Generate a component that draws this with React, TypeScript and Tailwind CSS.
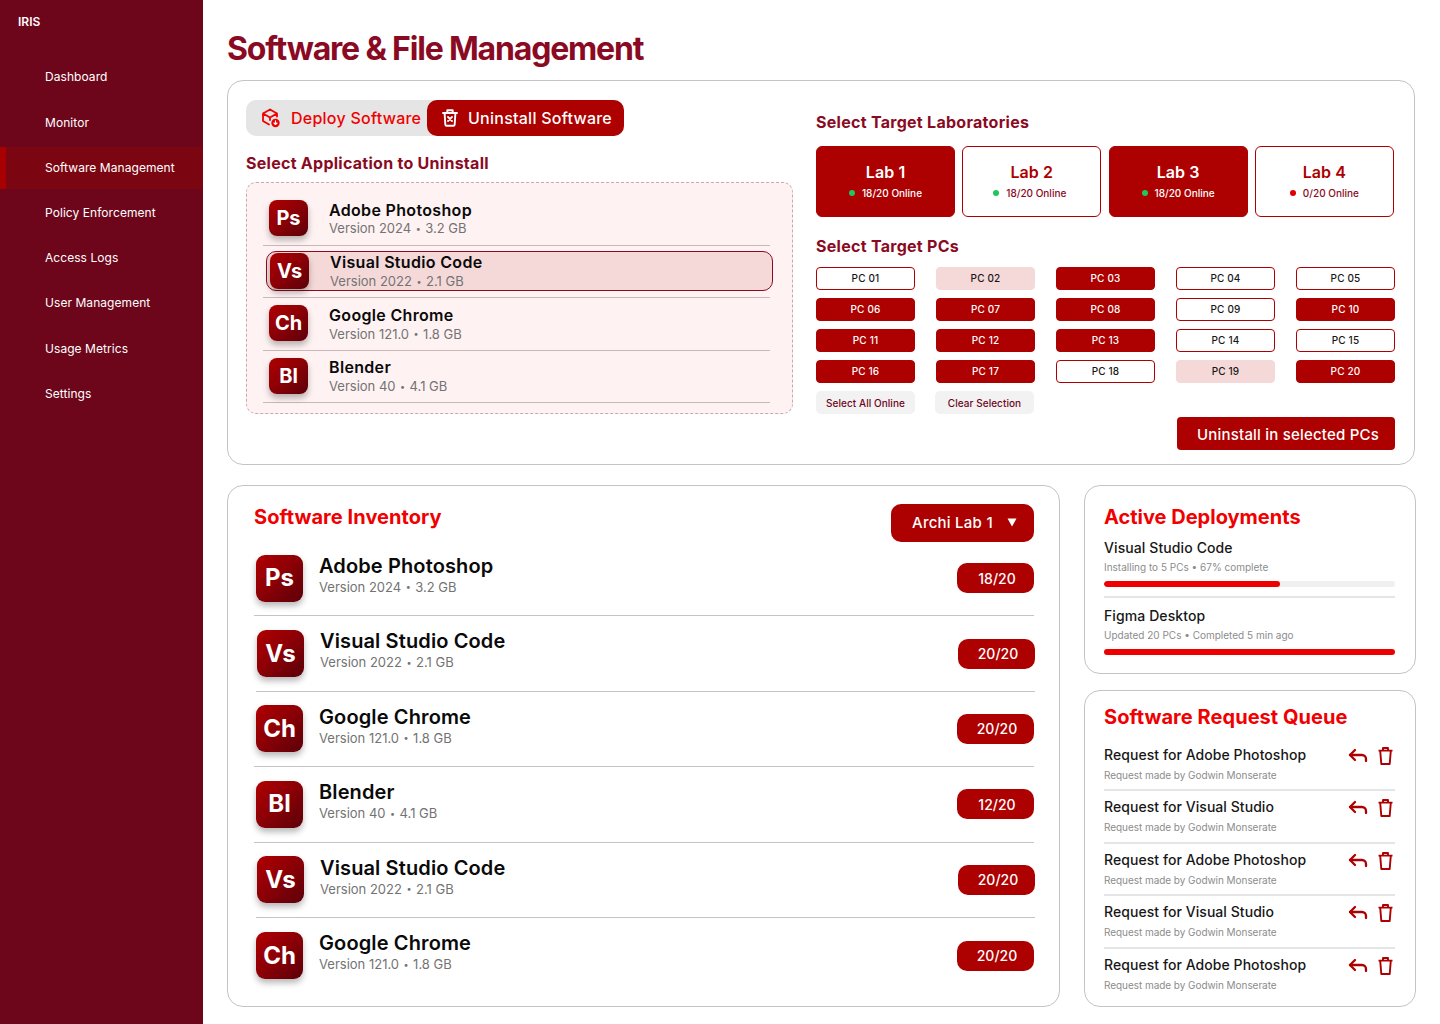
import React from "react";
import { Reply } from "lucide-react";

const nav = ["Dashboard", "Monitor", "Software Management", "Policy Enforcement", "Access Logs", "User Management", "Usage Metrics", "Settings"];

const apps = [
  { ab: "Ps", name: "Adobe Photoshop", v1: "Version 2024", v2: "3.2 GB", c: "18/20", row: "h-[46px]", inner: "pl-[6px]", tx: "" },
  { ab: "Vs", name: "Visual Studio Code", v1: "Version 2022", v2: "2.1 GB", c: "20/20", row: "mt-[4.5px] h-[47px]", inner: "ml-[3px] h-10 w-[507px] rounded-[10px] border border-[#8a0a24] bg-[#f5d9d9] pl-[3px]", tx: "mt-[1px]" },
  { ab: "Ch", name: "Google Chrome", v1: "Version 121.0", v2: "1.8 GB", c: "20/20", row: "h-[53.5px]", inner: "pl-[6px] pt-[7px]", tx: "" },
  { ab: "Bl", name: "Blender", v1: "Version 40", v2: "4.1 GB", c: "12/20", row: "h-[52px]", inner: "pl-[6px] pt-[6px]", tx: "" },
];
const inv = [...apps, apps[1], apps[2]];

const labs = [
  { n: "Lab 1", s: "18/20 Online", on: true, dot: "bg-[#22c55e]", sh: "" },
  { n: "Lab 2", s: "18/20 Online", on: false, dot: "bg-[#22c55e]", sh: "pr-[4px]" },
  { n: "Lab 3", s: "18/20 Online", on: true, dot: "bg-[#22c55e]", sh: "" },
  { n: "Lab 4", s: "0/20 Online", on: false, dot: "bg-[#e00000]", sh: "" },
];

// o: outline, p: pink, r: red
const pcs = "o p r o o r r r o r r r r o o r r o p r".split(" ");

const reqs = ["Adobe Photoshop", "Visual Studio", "Adobe Photoshop", "Visual Studio", "Adobe Photoshop"];

function AppIcon({ ab, size }: { ab: string; size: "sm" | "lg" }) {
  return (
    <div
      className={
        "flex shrink-0 items-center justify-center bg-gradient-to-tl from-[#5c0008] via-[#8a0006] to-[#b00000] font-bold text-white shadow-[0_4px_6px_rgba(0,0,0,0.28)] " +
        (size === "sm" ? "h-9 w-[39px] rounded-lg text-[20px]" : "h-[47px] w-[47px] rounded-[9px] text-[24px]")
      }
    >
      {ab}
    </div>
  );
}

function Ver({ a, b }: { a: string; b: string }) {
  return (
    <div className="text-[13px] leading-[16px] text-[#737373]">
      {a}
      <span className="mx-[4.5px] align-[1.5px] text-[9px]">•</span>
      {b}
    </div>
  );
}

function DeployIcon() {
  return (
    <svg width="20" height="22" viewBox="0 0 20 22" fill="none" className="shrink-0">
      <path d="M9 2.5 2 6.5v7.5l6 3.5M9 2.5l7 4v3M2 6.5l7 4 7-4M9 10.5v2.5" stroke="#f00000" strokeWidth="1.8" strokeLinejoin="round" strokeLinecap="round" />
      <circle cx="14.5" cy="16" r="4.2" fill="#f00000" />
      <path d="M14.5 13.8v3.6M13 16l1.5 1.5L16 16" stroke="#fff" strokeWidth="1.1" strokeLinecap="round" strokeLinejoin="round" />
    </svg>
  );
}

function BinIcon() {
  return (
    <svg width="16" height="18" viewBox="0 0 16 18" fill="none" className="shrink-0">
      <path d="M1 4h14M5.3 4V1.2h5.4V4M2.6 4l.7 11.2c0 .9.6 1.6 1.4 1.6h6.6c.8 0 1.4-.7 1.4-1.6L13.4 4" stroke="#fff" strokeWidth="1.9" strokeLinejoin="round" strokeLinecap="round" />
      <path d="m6 8 4 4M10 8l-4 4" stroke="#fff" strokeWidth="1.8" strokeLinecap="round" />
    </svg>
  );
}

function TrashIcon() {
  return (
    <svg width="15" height="18" viewBox="0 0 15 18" fill="none" className="shrink-0">
      <path d="M0.5 3.6h14M5 3.6V1h5v2.6M2.2 3.6l1.1 13.4h8.4l1.1-13.4" stroke="#ad0000" strokeWidth="1.9" strokeLinejoin="round" />
    </svg>
  );
}

export default function App() {
  return (
    <div className="flex h-[1024px] w-[1440px] overflow-hidden bg-white font-['Inter',sans-serif]">
      <aside className="w-[203px] shrink-0 bg-[#6e061b] text-white">
        <div className="px-[18px] pt-[14px] text-[12px] font-semibold leading-[16px]">IRIS</div>
        <nav className="mt-[26.4px] flex flex-col gap-[3.2px]">
          {nav.map((n) => (
            <div
              key={n}
              className={
                "flex h-[42px] items-center text-[12px] tracking-[0.06px] " +
                (n === "Software Management" ? "border-l-[6px] border-[#a80000] bg-[#7b0612] pl-[39px]" : "pl-[45px]")
              }
            >
              {n}
            </div>
          ))}
        </nav>
      </aside>

      <main className="flex-1 pl-6 pr-[24px]">
        <h1 className="mt-[29px] text-[32px] font-bold leading-[40px] tracking-[-1.18px] text-[#8a0a24]">Software &amp; File Management</h1>

        <section className="mt-[11px] flex h-[385px] w-[1188px] gap-[23px] rounded-[16px] border border-[#c4c4c4] px-[18px] pt-[19px]">
          <div className="w-[547px] shrink-0">
            <div className="flex h-9 w-[378px] items-center rounded-[10px] bg-[#e5e5e5] text-[16px] font-medium tracking-[0.25px]">
              <div className="flex flex-1 items-center gap-[10px] pl-[15px] text-[#f00000]">
                <DeployIcon />
                <span>Deploy Software</span>
              </div>
              <div className="flex h-9 w-[197px] items-center gap-[10px] rounded-[10px] bg-[#ad0000] pl-[15px] text-white">
                <BinIcon />
                <span className="tracking-[0.25px]">Uninstall Software</span>
              </div>
            </div>
            <h2 className="mt-[17px] text-[16px] font-bold leading-[20px] tracking-[0.27px] text-[#8a0a24]">Select Application to Uninstall</h2>
            <div className="mt-[9px] h-[232px] rounded-[10px] border border-dashed border-[#c9a9ae] bg-[#fef2f2] pl-4 pt-[17px]">
              {apps.map((a) => (
                <div key={a.ab} className={"w-[507px] border-b border-[#c8b8ba] " + a.row}>
                  <div className={"flex items-center " + a.inner}>
                    <AppIcon ab={a.ab} size="sm" />
                    <div className={"ml-[21px] min-w-0 " + a.tx}>
                      <div className={"text-[16px] font-semibold leading-[20px] tracking-[0.33px] text-[#0a0a0a] " + (a.ab === "Ps" ? "" : "mb-[1px]")}>{a.name}</div>
                      <Ver a={a.v1} b={a.v2} />
                    </div>
                  </div>
                </div>
              ))}
            </div>
          </div>

          <div className="w-[579px] shrink-0 pt-[12px]">
            <h2 className="text-[16px] font-bold leading-[20px] tracking-[0.28px] text-[#8a0a24]">Select Target Laboratories</h2>
            <div className="mt-[14px] flex gap-[7.3px]">
              {labs.map((l) => (
                <div
                  key={l.n}
                  className={
                    "flex h-[71px] w-[139px] flex-col items-center justify-center rounded-[6px] border pb-[2px] " +
                    (l.on ? "border-[#ad0000] bg-[#ad0000] text-white" : "border-[#ad0000] bg-white text-[#ad0000]")
                  }
                >
                  <div className="text-[16px] font-semibold leading-[20px] tracking-[0.1px]">{l.n}</div>
                  <div className={"mt-[4px] flex items-center gap-[7px] text-[10px] font-medium leading-[14px] " + l.sh + " " + (l.on ? "text-white" : "text-[#8a0a24]")}>
                    <span className={"h-[6px] w-[6px] rounded-full " + l.dot} />
                    {l.s}
                  </div>
                </div>
              ))}
            </div>
            <h2 className="mt-[19px] text-[16px] font-bold leading-[20px] tracking-[0.28px] text-[#8a0a24]">Select Target PCs</h2>
            <div className="mt-[11px] grid w-[579px] grid-cols-5 gap-x-[21px] gap-y-2">
              {pcs.map((p, i) => (
                <div
                  key={i}
                  className={
                    "flex h-[23px] items-center justify-center rounded-[4px] border text-[10px] font-medium tracking-[0.15px] " +
                    (p === "r"
                      ? "border-[#ad0000] bg-[#ad0000] text-white"
                      : p === "p"
                        ? "border-[#f5d9d9] bg-[#f5d9d9] text-[#171717]"
                        : "border-[#ad0000] bg-white text-[#171717]")
                  }
                >
                  PC {String(i + 1).padStart(2, "0")}
                </div>
              ))}
            </div>
            <div className="mt-2 flex gap-5 text-[10px] font-medium tracking-[0.05px] text-[#6e061b]">
              <div className="flex h-[23px] w-[99px] items-center justify-center rounded-[5px] bg-[#f2f2f2] pt-[1px]">Select All Online</div>
              <div className="flex h-[23px] w-[99px] items-center justify-center rounded-[5px] bg-[#f2f2f2] pt-[1px]">Clear Selection</div>
            </div>
            <div className="mt-[3px] flex justify-end">
              <div className="flex h-[33px] w-[218px] items-center justify-center rounded-[4px] bg-[#ad0000] pl-[4px] pt-[3px] text-[15px] font-medium tracking-[0.2px] text-white">
                Uninstall in selected PCs
              </div>
            </div>
          </div>
        </section>

        <div className="mt-5 flex gap-6">
          <section className="h-[522px] w-[833px] shrink-0 rounded-[16px] border border-[#c4c4c4] px-[26px] pt-[18px]">
            <div className="flex h-[38px] items-start justify-between">
              <h2 className="text-[20px] font-bold leading-[26px] tracking-[0.05px] text-[#f00000]">Software Inventory</h2>
              <div className="mr-[-1px] flex h-[38px] w-[143px] items-center rounded-[10px] bg-[#ad0000] pl-[21px] text-[15px] font-medium tracking-[0.25px] text-white">
                Archi Lab 1
                <svg width="10" height="9" viewBox="0 0 10 9" className="ml-[14px] mb-[1px]"><path d="M0.5 0.5h9L5 8.5z" fill="#fff" /></svg>
              </div>
            </div>
            <div className="mt-[-1px]">
              {inv.map((a, i) => (
                <div key={i} className={"flex h-[75.4px] items-center justify-between border-[#c4c4c4] " + (i < 5 ? "border-b " : "") + (a.ab === "Vs" ? "ml-[2px] mr-[-2px] pl-[1px]" : "mr-[-1px] pl-[2px]")}>
                  <div className="flex items-center">
                    <AppIcon ab={a.ab} size="lg" />
                    <div className="mb-[7px] ml-4">
                      <div className="mb-[1px] text-[20px] font-semibold leading-[24px] tracking-[0.12px] text-[#0a0a0a]">{a.name}</div>
                      <Ver a={a.v1} b={a.v2} />
                    </div>
                  </div>
                  <div className="flex h-[30px] w-[77px] items-center justify-center rounded-[10px] bg-[#ad0000] pl-[3px] text-[14px] font-medium text-white">{a.c}</div>
                </div>
              ))}
            </div>
          </section>

          <div className="flex w-[332px] shrink-0 flex-col gap-4">
            <section className="h-[189px] rounded-[16px] border border-[#c4c4c4] pl-[19px] pr-[20px] pt-[18px]">
              <h2 className="text-[20px] font-bold leading-[26px] text-[#f00000]">Active Deployments</h2>
              <div className="mt-[9px] text-[14px] font-medium leading-[18px] tracking-[0.1px] text-[#171717]">Visual Studio Code</div>
              <div className="mt-[3px] text-[10px] leading-[14px] text-[#8c8c8c]">Installing to 5 PCs • 67% complete</div>
              <div className="mt-[7px] h-[6px] overflow-hidden rounded-full bg-[#f0f0f0]">
                <div className="h-full w-[176px] rounded-full bg-[#ee0000]" />
              </div>
              <div className="mt-[9px] h-[2px] bg-[#e5e5e5]" />
              <div className="mt-[9px] text-[14px] font-medium leading-[18px] tracking-[0.1px] text-[#171717]">Figma Desktop</div>
              <div className="mt-[3px] text-[10px] leading-[14px] text-[#8c8c8c]">Updated 20 PCs • Completed 5 min ago</div>
              <div className="mt-[7px] h-[6px] rounded-full bg-[#ee0000]" />
            </section>
            <section className="h-[317px] rounded-[16px] border border-[#c4c4c4] pl-[19px] pr-[20px] pt-[13px]">
              <h2 className="text-[20px] font-bold leading-[26px] tracking-[0.05px] text-[#f00000]">Software Request Queue</h2>
              <div className="mt-[8.5px]">
                {reqs.map((r, i) => (
                  <div key={i} className={"flex h-[52.5px] items-start justify-between pt-[7px] " + (i < 4 ? "border-b-2 border-[#e5e5e5]" : "")}>
                    <div>
                      <div className="text-[14px] font-medium leading-[18px] tracking-[0.06px] text-[#171717]">Request for {r}</div>
                      <div className="mt-[4px] text-[10px] leading-[14px] tracking-[-0.05px] text-[#8c8c8c]">Request made by Godwin Monserate</div>
                    </div>
                    <div className="mr-[2px] mt-[-3px] flex items-center gap-[8px] text-[#ad0000]">
                      <Reply size={24} strokeWidth={2.3} className="mb-[2px]" />
                      <TrashIcon />
                    </div>
                  </div>
                ))}
              </div>
            </section>
          </div>
        </div>
      </main>
    </div>
  );
}
